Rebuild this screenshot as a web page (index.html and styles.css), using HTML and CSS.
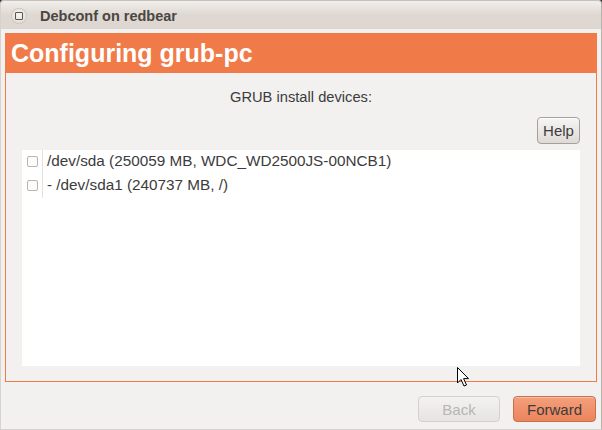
FILE: index.html
```html
<!DOCTYPE html>
<html>
<head>
<meta charset="utf-8">
<link rel="stylesheet" href="styles.css">
</head>
<body>
<div class="window">
  <div class="titlebar">
    <span class="tb-btn"><span class="tb-sq"></span></span>
    <span class="tb-title">Debconf on redbear</span>
  </div>
  <div class="frame">
    <div class="banner">Configuring grub-pc</div>
    <div class="prompt">GRUB install devices:</div>
    <div class="help-row"><button class="btn help">Help</button></div>
    <div class="list">
      <div class="row"><span class="cell-check"><span class="check"></span></span><span class="cell-text">/dev/sda (250059 MB, WDC_WD2500JS-00NCB1)</span></div>
      <div class="row"><span class="cell-check"><span class="check"></span></span><span class="cell-text">- /dev/sda1 (240737 MB, /)</span></div>
      <div class="list-rest"><span class="cell-check"></span></div>
    </div>
  </div>
  <div class="actions">
    <button class="btn back" disabled>Back</button>
    <button class="btn forward">Forward</button>
  </div>
  <svg class="cursor" width="14" height="22" viewBox="0 0 14 22">
    <path d="M1.5 1.5 L1.5 17 L5 13.5 L8 20 L10.5 19 L7.6 12.6 L12.5 12.6 Z" fill="#fff" stroke="#000" stroke-width="1" stroke-linejoin="round"/>
  </svg>
</div>
</body>
</html>
```

FILE: styles.css
```css
html, body {
  margin: 0;
  padding: 0;
}
body {
  width: 602px;
  height: 430px;
  background: #3c2a35;
  overflow: hidden;
  font-family: "Liberation Sans", Arial, sans-serif;
}
.window {
  position: relative;
  width: 602px;
  height: 430px;
  box-sizing: border-box;
  background: #f2f1f0;
  border-left: 1px solid #d6d3cf;
  border-bottom: 1px solid #d6d3cf;
  border-right: 1px solid #b9b3ad;
  border-radius: 4px 4px 0 0;
  display: flex;
  flex-direction: column;
}
.titlebar {
  height: 29px;
  flex: none;
  display: flex;
  align-items: center;
  background: linear-gradient(#f1efec 0px, #e9e5e1 6px, #dfd7d1 14px, #ded6d0 29px);
  border-radius: 4px 4px 0 0;
  border-top: 1px solid #c7c0b9;
  box-sizing: border-box;
}
.tb-btn {
  width: 14px;
  height: 14px;
  margin-left: 11px;
  margin-top: 1px;
  border-radius: 50%;
  background: radial-gradient(circle at 50% 40%, #f7f5f3 0%, #e4ded9 70%, #d2cbc5 100%);
  box-shadow: 0 0 0 1px #cfc7c0;
  display: flex;
  align-items: center;
  justify-content: center;
}
.tb-sq {
  width: 6px;
  height: 6px;
  border: 1px solid #5a544f;
  border-radius: 1px;
}
.tb-title {
  margin-left: 14px;
  margin-top: 1px;
  font-weight: bold;
  font-size: 14.5px;
  color: #4a4641;
}
.frame {
  margin: 4px 4px 0 4px;
  height: 348px;
  flex: none;
  border: 1px solid #f07b48;
  border-top: none;
  display: flex;
  flex-direction: column;
}
.banner {
  height: 40px;
  background: #f07b48;
  color: #ffffff;
  font-weight: bold;
  font-size: 25px;
  line-height: 40px;
  padding-left: 6px;
  margin: 0 -1px;
}
.prompt {
  text-align: center;
  font-size: 14.7px;
  color: #3c3c3c;
  margin-top: 16px;
  line-height: 17px;
}
.help-row {
  display: flex;
  justify-content: flex-end;
  padding-right: 16px;
  margin-top: 11px;
}
.btn {
  font-family: "Liberation Sans", Arial, sans-serif;
  font-size: 15px;
  border-radius: 4px;
  padding: 0;
  box-sizing: border-box;
}
.help {
  width: 43px;
  height: 27px;
  border: 1px solid #a5a09b;
  background: linear-gradient(#f6f5f4, #dedad6);
  color: #3c3c3c;
  box-shadow: inset 0 1px 0 #fff;
}
.list {
  margin: 6px 16px 15px 16px;
  background: #ffffff;
  flex: 1;
  display: flex;
  flex-direction: column;
}
.row {
  display: flex;
  height: 24px;
  align-items: flex-start;
}
.cell-check {
  width: 21px;
  height: 100%;
  flex: none;
  box-sizing: border-box;
  border-right: 1px solid #e3e1df;
  display: flex;
  align-items: center;
  justify-content: center;
}
.check {
  width: 9px;
  height: 9px;
  border: 1px solid #b8b4b0;
  border-radius: 2px;
  background: #fbfbfa;
  margin-left: 0;
  margin-top: -1px;
}
.cell-text {
  padding-left: 4px;
  font-size: 15.3px;
  color: #3c3c3c;
  line-height: 22px;
  white-space: nowrap;
}
.list-rest {
  flex: 1;
  display: flex;
}
.list-rest .cell-check {
  border-right: none;
}
.actions {
  flex: 1;
  display: flex;
  justify-content: flex-end;
  align-items: flex-start;
  gap: 13px;
  padding-top: 14px;
  padding-right: 5px;
}
.back {
  width: 82px;
  height: 26px;
  border: 1px solid #d4d1cd;
  background: linear-gradient(#f3f2f1, #e6e4e1);
  color: #b8b5b2;
}
.forward {
  width: 83px;
  height: 26px;
  border: 1px solid #c7704e;
  background: linear-gradient(#f3a07c, #ec845c);
  color: #3c3c3c;
  box-shadow: inset 0 1px 0 rgba(255,255,255,0.35);
}
.cursor {
  position: absolute;
  left: 455px;
  top: 366px;
}
```
